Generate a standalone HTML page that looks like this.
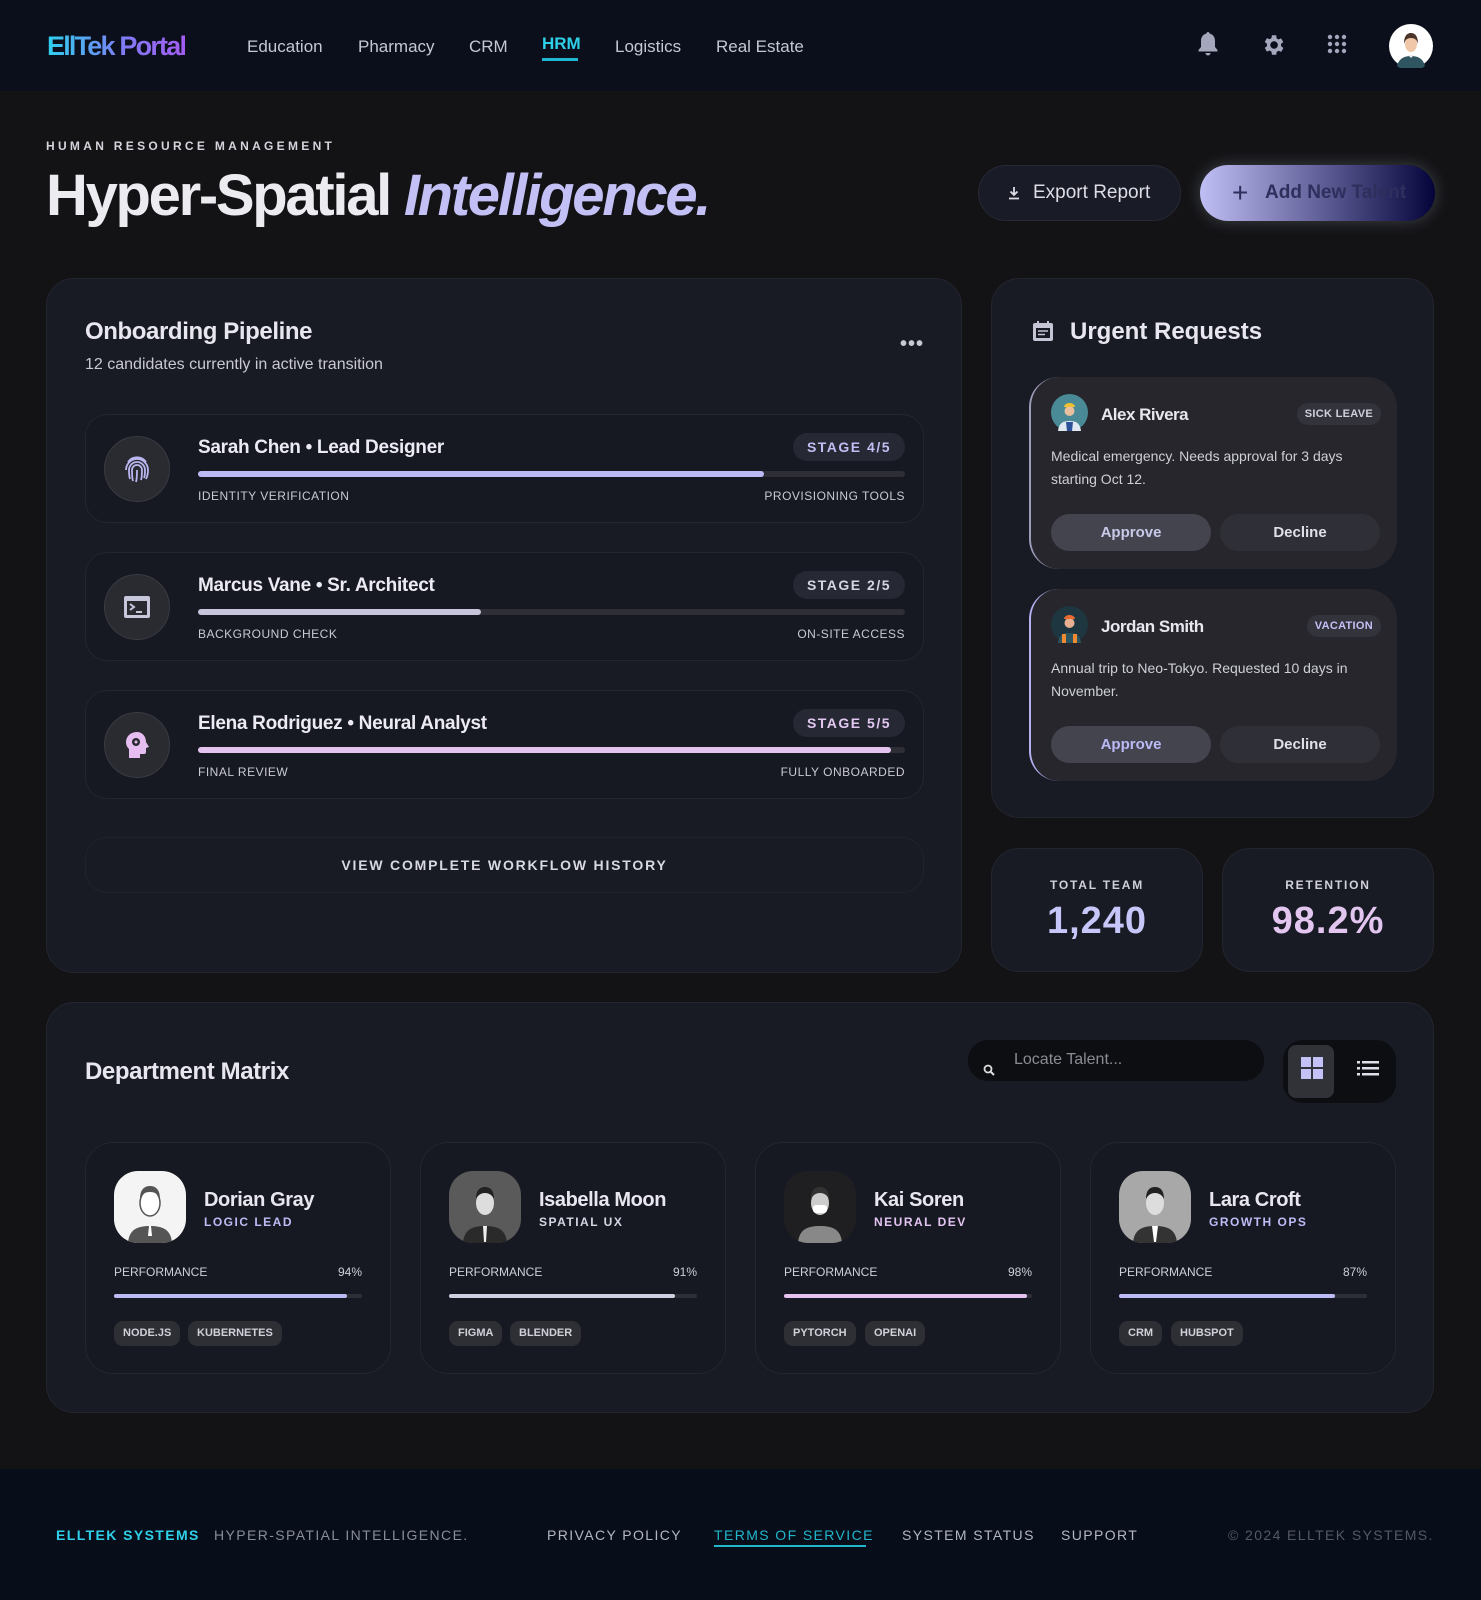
<!DOCTYPE html>
<html><head><meta charset="utf-8"><style>
*{box-sizing:border-box;margin:0;padding:0}
body{width:1481px;height:1600px;background:#131316;font-family:"Liberation Sans",sans-serif;color:#e8e6ee;position:relative;overflow:hidden}
.a{position:absolute}
.hdr{left:0;top:0;width:1481px;height:91px;background:#0b0f1c}
.nav{font-size:17px;color:#c5c7d3;top:37px}
.card{background:#181a24;border:1px solid #23252f;border-radius:28px}
.row{left:85px;width:839px;height:109px;border:1px solid #23252f;border-radius:22px;background:#171922}
.ic{left:18px;top:21px;width:66px;height:66px;border-radius:50%;background:#2a2a31;border:1px solid #3a3a42;display:flex;align-items:center;justify-content:center}
.nm{left:112px;top:22px;font-size:19px;font-weight:bold;color:#eceaf2;letter-spacing:-.3px}
.stg{right:18px;top:18px;height:28px;padding:0 14px;border-radius:14px;background:#262833;font-size:14px;font-weight:bold;letter-spacing:1.5px;line-height:28px}
.bar{left:112px;right:18px;top:56px;height:6px;border-radius:3px;background:#2d2e36}
.bar i{display:block;height:6px;border-radius:3px}
.lb{top:74px;font-size:12px;color:#c9c9d2;letter-spacing:.5px}
.req{left:38px;width:368px;border-radius:30px;background:#26262c;border-left:2px solid #9b9bb8}
.btn{top:0;height:37px;width:160px;border-radius:19px;font-size:15px;font-weight:bold;text-align:center;line-height:37px}
.pill{height:22px;padding:0 8px;border-radius:11px;background:#33333c;font-size:11px;font-weight:bold;line-height:22px;letter-spacing:.3px}
.mem{top:1142px;width:306px;height:232px;border:1px solid #23252f;border-radius:28px;background:#171922}
.av{left:28px;top:28px;width:72px;height:72px;border-radius:24px;overflow:hidden}
.mn{left:118px;top:46px;font-size:20px;font-weight:bold;letter-spacing:-.4px}
.mr{left:118px;top:72px;font-size:12px;font-weight:bold;letter-spacing:1.5px}
.pf{left:28px;right:28px;top:122px;font-size:12px;color:#cfcfd8}
.mb{left:28px;right:28px;top:151px;height:4px;border-radius:2px;background:#2d2e36}
.mb i{display:block;height:4px;border-radius:2px}
.tg{top:178px;height:25px;padding:0 9px;border-radius:9px;background:#2e2e35;font-size:11px;font-weight:bold;line-height:25px;color:#d0d0d8}
.ft{top:1527px;font-size:14px;letter-spacing:1.4px;color:#b4b6c2;white-space:nowrap}
</style></head><body>
<div class="a hdr"></div>
<div class="a" style="left:47px;top:31px;font-size:27px;font-weight:bold;letter-spacing:-1.8px;background:linear-gradient(90deg,#2ed0f0,#7f7cf5 55%,#a35cf0);-webkit-background-clip:text;color:transparent">EllTek Portal</div>
<div class="a nav" style="left:247px">Education</div>
<div class="a nav" style="left:358px">Pharmacy</div>
<div class="a nav" style="left:469px">CRM</div>
<div class="a nav" style="left:542px;top:34px;color:#2ed0e8;font-weight:bold">HRM</div>
<div class="a" style="left:542px;top:58px;width:36px;height:3px;background:#1fb8d0"></div>
<div class="a nav" style="left:615px">Logistics</div>
<div class="a nav" style="left:716px">Real Estate</div>
<svg class="a" style="left:1196px;top:30px" width="24" height="28" viewBox="0 0 24 28"><path d="M12 2c-1 0-1.5.7-1.5 1.5C6.5 4.5 5 7.5 5 11v6l-2.5 3v1.5h19V20L19 17v-6c0-3.5-1.5-6.5-5.5-7.5C13.5 2.7 13 2 12 2zM9.5 23a2.5 2.5 0 005 0z" fill="#a4a6bc"/></svg>
<svg class="a" style="left:1260px;top:32px" width="26" height="26" viewBox="0 0 24 24"><path fill="#a4a6bc" d="M19.4 13a7.5 7.5 0 000-2l2.1-1.6-2-3.5-2.5 1a7 7 0 00-1.7-1L15 3h-4l-.4 2.7a7 7 0 00-1.7 1l-2.5-1-2 3.5L6.5 11a7.5 7.5 0 000 2l-2.1 1.6 2 3.5 2.5-1a7 7 0 001.7 1L11 21h4l.4-2.7a7 7 0 001.7-1l2.5 1 2-3.5zM13 15.5A3.5 3.5 0 1113 8.5a3.5 3.5 0 010 7z"/></svg>
<svg class="a" style="left:1327px;top:34px" width="20" height="20" viewBox="0 0 20 20" fill="#a4a6bc"><circle cx="3" cy="3" r="2.2"/><circle cx="10" cy="3" r="2.2"/><circle cx="17" cy="3" r="2.2"/><circle cx="3" cy="10" r="2.2"/><circle cx="10" cy="10" r="2.2"/><circle cx="17" cy="10" r="2.2"/><circle cx="3" cy="17" r="2.2"/><circle cx="10" cy="17" r="2.2"/><circle cx="17" cy="17" r="2.2"/></svg>
<svg class="a" style="left:1389px;top:24px" width="44" height="44" viewBox="0 0 44 44"><circle cx="22" cy="22" r="22" fill="#fff"/><path d="M8 42c2-8 8-10 14-10s12 2 14 10a22 22 0 01-28 0z" fill="#2f5560"/><path d="M19 31l3 3 3-3z" fill="#eee"/><ellipse cx="22" cy="20" rx="6" ry="8" fill="#f0c7a8"/><path d="M15 20c0-8 3-11 7-11s7 3 7 11c-1-4-3-6-7-6s-6 2-7 6z" fill="#4a3328"/></svg>

<div class="a" style="left:46px;top:139px;font-size:12px;font-weight:bold;letter-spacing:3.3px;color:#d4d4dc">HUMAN RESOURCE MANAGEMENT</div>
<div class="a" style="left:46px;top:162px;font-size:58px;font-weight:bold;letter-spacing:-2.3px;color:#ecebf0;white-space:nowrap">Hyper-Spatial <i style="color:#c3c0f6">Intelligence.</i></div>
<div class="a" style="left:978px;top:165px;width:203px;height:56px;border-radius:28px;background:#191b26;border:1px solid #262834;font-size:19px;color:#dedde6;line-height:54px;padding-left:54px">Export Report</div>
<svg class="a" style="left:1007px;top:186px" width="14" height="14" viewBox="0 0 14 14"><path d="M7 1v8M3.5 5.5L7 9l3.5-3.5M2 12.5h10" stroke="#dedde6" stroke-width="1.8" fill="none"/></svg>
<div class="a" style="left:1200px;top:165px;width:235px;height:56px;border-radius:28px;background:linear-gradient(90deg,#c0bff5,#5a5890 55%,#04043a);box-shadow:0 0 16px rgba(200,210,220,.25);font-size:19px;font-weight:bold;color:#2e2f5c;line-height:56px;padding-left:65px;white-space:nowrap;overflow:hidden">Add New Talent</div>
<div class="a" style="left:1232px;top:182px;font-size:28px;color:#2e2f5c;line-height:22px">+</div>

<div class="a card" style="left:46px;top:278px;width:916px;height:695px"></div>
<div class="a" style="left:85px;top:318px;font-size:24px;font-weight:bold;letter-spacing:-.4px">Onboarding Pipeline</div>
<div class="a" style="left:85px;top:356px;font-size:16px;color:#c9c9d2">12 candidates currently in active transition</div>
<div class="a" style="left:900px;top:333px;font-size:20px;font-weight:bold;letter-spacing:1px;color:#c9c9d2">•••</div>

<div class="a row" style="top:414px">
 <div class="a ic"><svg width="28" height="30" viewBox="0 0 28 30" fill="none" stroke="#b9b6f0" stroke-width="1.8"><path d="M5 8a11 11 0 0118 0M3 16a11 11 0 0122 0c0 4-1 7-2 9M7 25c-1-3-1-6-1-9a8 8 0 0116 0c0 3 0 6-1 8M10 27c-1-3-1-7-1-11a5 5 0 0110 0c0 4 0 7-1 10M14 16c0 5 0 9-1 12"/></svg></div>
 <div class="a nm">Sarah Chen • Lead Designer</div>
 <div class="a stg" style="color:#c0bef2">STAGE 4/5</div>
 <div class="a bar"><i style="width:80%;background:#bcbaf6"></i></div>
 <div class="a lb" style="left:112px">IDENTITY VERIFICATION</div><div class="a lb" style="right:18px">PROVISIONING TOOLS</div>
</div>
<div class="a row" style="top:552px">
 <div class="a ic"><svg width="28" height="24" viewBox="0 0 28 24"><rect x="1" y="1" width="26" height="22" rx="2" fill="#c7c7dc"/><rect x="4" y="6" width="20" height="14" fill="#2a2a31"/><path d="M7 9l4 3-4 3M13 17h6" stroke="#c7c7dc" stroke-width="2" fill="none"/></svg></div>
 <div class="a nm">Marcus Vane • Sr. Architect</div>
 <div class="a stg" style="color:#d6d5e4">STAGE 2/5</div>
 <div class="a bar"><i style="width:40%;background:#c6c5dc"></i></div>
 <div class="a lb" style="left:112px">BACKGROUND CHECK</div><div class="a lb" style="right:18px">ON-SITE ACCESS</div>
</div>
<div class="a row" style="top:690px">
 <div class="a ic"><svg width="28" height="30" viewBox="0 0 28 30"><path d="M14 2C7 2 3 7 3 12c0 3 1 5 3 7v9h11v-4h4a2 2 0 002-2v-4l3-1-3-5c0-6-4-10-9-10z" fill="#e6bdf0"/><circle cx="13" cy="12" r="4" fill="#2a2a31"/><circle cx="13" cy="12" r="1.5" fill="#e6bdf0"/></svg></div>
 <div class="a nm">Elena Rodriguez • Neural Analyst</div>
 <div class="a stg" style="color:#e2c8f0">STAGE 5/5</div>
 <div class="a bar"><i style="width:98%;background:#e4c3ef"></i></div>
 <div class="a lb" style="left:112px">FINAL REVIEW</div><div class="a lb" style="right:18px">FULLY ONBOARDED</div>
</div>
<div class="a" style="left:85px;top:837px;width:839px;height:56px;border:1px solid #20222c;border-radius:22px;text-align:center;line-height:54px;font-size:14px;font-weight:bold;letter-spacing:1.8px;color:#d8d8e0">VIEW COMPLETE WORKFLOW HISTORY</div>

<div class="a card" style="left:991px;top:278px;width:443px;height:540px"></div>
<svg class="a" style="left:1032px;top:320px" width="22" height="22" viewBox="0 0 22 22"><rect x="1" y="3" width="20" height="18" rx="2" fill="#c5c5d6"/><rect x="4" y="8" width="14" height="10" fill="#181a24"/><path d="M6 11h10M6 14.5h7" stroke="#c5c5d6" stroke-width="1.6"/><path d="M6 1v4M16 1v4" stroke="#c5c5d6" stroke-width="2"/></svg>
<div class="a" style="left:1070px;top:318px;font-size:24px;font-weight:bold">Urgent Requests</div>
<div class="a req" style="left:1029px;top:377px;height:192px">
 <svg class="a" style="left:20px;top:17px" width="37" height="37" viewBox="0 0 37 37"><circle cx="18.5" cy="18.5" r="18.5" fill="#4a8a96"/><path d="M7 37c1-8 5-10 11.5-10S29 29 30 37z" fill="#dfe8f0"/><path d="M15 28h7l-1 9h-5z" fill="#2c4f9a"/><circle cx="18.5" cy="17" r="5" fill="#e8c0a0"/><path d="M13 13a5.5 4 0 0111 0z" fill="#f0c030"/></svg>
 <div class="a" style="left:70px;top:28px;font-size:17px;font-weight:bold;letter-spacing:-.5px">Alex Rivera</div>
 <div class="a pill" style="right:16px;top:26px;color:#cfd0dc">SICK LEAVE</div>
 <div class="a" style="left:20px;top:68px;width:320px;font-size:14px;line-height:23px;color:#cfcfd8">Medical emergency. Needs approval for 3 days starting Oct 12.</div>
 <div class="a btn" style="left:20px;top:137px;background:#44444f;color:#c8c8e8">Approve</div>
 <div class="a btn" style="left:189px;top:137px;background:#2f2f37;color:#e0e0e8">Decline</div>
</div>
<div class="a req" style="left:1029px;top:589px;height:192px;border-left-color:#b3b1f0">
 <svg class="a" style="left:20px;top:17px" width="37" height="37" viewBox="0 0 37 37"><circle cx="18.5" cy="18.5" r="18.5" fill="#1e3640"/><path d="M7 37c1-8 5-10 11.5-10S29 29 30 37z" fill="#2a5560"/><path d="M11 28v9h4v-9zM22 28v9h4v-9z" fill="#f08a30"/><circle cx="18.5" cy="17" r="5" fill="#e8b090"/><path d="M13 13a5.5 4 0 0111 0z" fill="#e86a30"/></svg>
 <div class="a" style="left:70px;top:28px;font-size:17px;font-weight:bold;letter-spacing:-.5px">Jordan Smith</div>
 <div class="a pill" style="right:16px;top:26px;color:#c3c0f6">VACATION</div>
 <div class="a" style="left:20px;top:68px;width:320px;font-size:14px;line-height:23px;color:#cfcfd8">Annual trip to Neo-Tokyo. Requested 10 days in November.</div>
 <div class="a btn" style="left:20px;top:137px;background:#44444f;color:#bcbaf6">Approve</div>
 <div class="a btn" style="left:189px;top:137px;background:#2f2f37;color:#e0e0e8">Decline</div>
</div>

<div class="a card" style="left:991px;top:848px;width:212px;height:124px;text-align:center">
 <div style="margin-top:29px;font-size:12px;font-weight:bold;letter-spacing:1.8px;color:#d0d0da">TOTAL TEAM</div>
 <div style="margin-top:8px;font-size:38px;font-weight:bold;color:#c7c6f8;letter-spacing:1px">1,240</div>
</div>
<div class="a card" style="left:1222px;top:848px;width:212px;height:124px;text-align:center">
 <div style="margin-top:29px;font-size:12px;font-weight:bold;letter-spacing:1.8px;color:#d0d0da">RETENTION</div>
 <div style="margin-top:8px;font-size:38px;font-weight:bold;color:#e2c6f0;letter-spacing:1px">98.2%</div>
</div>

<div class="a card" style="left:46px;top:1002px;width:1388px;height:411px"></div>
<div class="a" style="left:85px;top:1058px;font-size:24px;font-weight:bold;letter-spacing:-.4px">Department Matrix</div>
<div class="a" style="left:968px;top:1040px;width:296px;height:41px;border-radius:20px;background:#0d0e12"></div>
<svg class="a" style="left:983px;top:1064px" width="12" height="12" viewBox="0 0 12 12"><circle cx="5" cy="5" r="3.5" stroke="#ddd" stroke-width="1.8" fill="none"/><path d="M7.5 7.5L11 11" stroke="#ddd" stroke-width="2"/></svg>
<div class="a" style="left:1014px;top:1051px;font-size:16px;color:#8a8b94">Locate Talent...</div>
<div class="a" style="left:1283px;top:1040px;width:113px;height:63px;border-radius:20px;background:#0d0e12"></div>
<div class="a" style="left:1288px;top:1045px;width:46px;height:53px;border-radius:8px;background:#313138"></div>
<svg class="a" style="left:1301px;top:1057px" width="22" height="22" viewBox="0 0 22 22" fill="#c3c1f7"><rect x="0" y="0" width="10" height="10"/><rect x="12" y="0" width="10" height="10"/><rect x="0" y="12" width="10" height="10"/><rect x="12" y="12" width="10" height="10"/></svg>
<svg class="a" style="left:1357px;top:1061px" width="22" height="15" viewBox="0 0 22 15" fill="#e0e0ea"><rect x="0" y="0" width="3" height="2.5"/><rect x="5" y="0" width="17" height="2.5"/><rect x="0" y="6" width="3" height="2.5"/><rect x="5" y="6" width="17" height="2.5"/><rect x="0" y="12" width="3" height="2.5"/><rect x="5" y="12" width="17" height="2.5"/></svg>

<div class="a mem" style="left:85px">
 <div class="a av" style="background:#f4f4f4"><svg width="72" height="72" viewBox="0 0 72 72"><path d="M14 72c1-14 10-17 22-17s21 3 22 17z" fill="#555"/><ellipse cx="36" cy="32" rx="10" ry="13" fill="#fff" stroke="#555" stroke-width="1.5"/><path d="M26 28c0-9 4-13 10-13s10 4 10 13c-2-5-5-7-10-7s-8 2-10 7z" fill="#555"/><path d="M35 55h2l1 10h-4z" fill="#fff"/></svg></div>
 <div class="a mn">Dorian Gray</div><div class="a mr" style="color:#bebcf6">LOGIC LEAD</div>
 <div class="a pf">PERFORMANCE<span style="float:right">94%</span></div>
 <div class="a mb"><i style="width:94%;background:#bdbbf6"></i></div>
 <div class="a tg" style="left:28px">NODE.JS</div><div class="a tg" style="left:102px">KUBERNETES</div>
</div>
<div class="a mem" style="left:420px">
 <div class="a av" style="background:#5a5a5a"><svg width="72" height="72" viewBox="0 0 72 72"><path d="M14 72c1-14 10-17 22-17s21 3 22 17z" fill="#2a2a2a"/><ellipse cx="36" cy="32" rx="9" ry="12" fill="#ddd"/><path d="M27 28c0-9 4-12 9-12s9 3 9 12c-2-4-5-6-9-6s-7 2-9 6z" fill="#222"/><path d="M34 55h4l-1 16h-2z" fill="#eee"/></svg></div>
 <div class="a mn">Isabella Moon</div><div class="a mr" style="color:#d6d6e4">SPATIAL UX</div>
 <div class="a pf">PERFORMANCE<span style="float:right">91%</span></div>
 <div class="a mb"><i style="width:91%;background:#cfcfe0"></i></div>
 <div class="a tg" style="left:28px">FIGMA</div><div class="a tg" style="left:89px">BLENDER</div>
</div>
<div class="a mem" style="left:755px">
 <div class="a av" style="background:#1f1f22"><svg width="72" height="72" viewBox="0 0 72 72"><path d="M14 72c1-14 10-17 22-17s21 3 22 17z" fill="#888"/><ellipse cx="36" cy="32" rx="9" ry="12" fill="#ccc"/><rect x="29" y="34" width="14" height="8" rx="3" fill="#fff"/><path d="M27 28c0-9 4-12 9-12s9 3 9 12c-2-4-5-6-9-6s-7 2-9 6z" fill="#333"/></svg></div>
 <div class="a mn">Kai Soren</div><div class="a mr" style="color:#e3c4f1">NEURAL DEV</div>
 <div class="a pf">PERFORMANCE<span style="float:right">98%</span></div>
 <div class="a mb"><i style="width:98%;background:#e4c3ef"></i></div>
 <div class="a tg" style="left:28px">PYTORCH</div><div class="a tg" style="left:109px">OPENAI</div>
</div>
<div class="a mem" style="left:1090px">
 <div class="a av" style="background:#a8a8a8"><svg width="72" height="72" viewBox="0 0 72 72"><path d="M14 72c1-14 10-17 22-17s21 3 22 17z" fill="#333"/><ellipse cx="36" cy="32" rx="9" ry="12" fill="#ddd"/><path d="M27 28c0-9 4-12 9-12s9 3 9 12c-2-4-5-6-9-6s-7 2-9 6z" fill="#222"/><path d="M33 55h6l-2 16h-2z" fill="#fff"/></svg></div>
 <div class="a mn">Lara Croft</div><div class="a mr" style="color:#bebcf6">GROWTH OPS</div>
 <div class="a pf">PERFORMANCE<span style="float:right">87%</span></div>
 <div class="a mb"><i style="width:87%;background:#bdbbf6"></i></div>
 <div class="a tg" style="left:28px">CRM</div><div class="a tg" style="left:80px">HUBSPOT</div>
</div>

<div class="a" style="left:0;top:1469px;width:1481px;height:131px;background:#080d1a"></div>
<div class="a ft" style="left:56px;color:#2fd0e8;font-weight:bold">ELLTEK SYSTEMS</div>
<div class="a ft" style="left:214px;color:#8a8c98">HYPER-SPATIAL INTELLIGENCE.</div>
<div class="a ft" style="left:547px">PRIVACY POLICY</div>
<div class="a ft" style="left:714px;color:#22b6cc">TERMS OF SERVICE</div>
<div class="a" style="left:714px;top:1545px;width:152px;height:2px;background:#22b6cc"></div>
<div class="a ft" style="left:902px">SYSTEM STATUS</div>
<div class="a ft" style="left:1061px">SUPPORT</div>
<div class="a ft" style="left:1228px;color:#555866">© 2024 ELLTEK SYSTEMS.</div>
</body></html>
